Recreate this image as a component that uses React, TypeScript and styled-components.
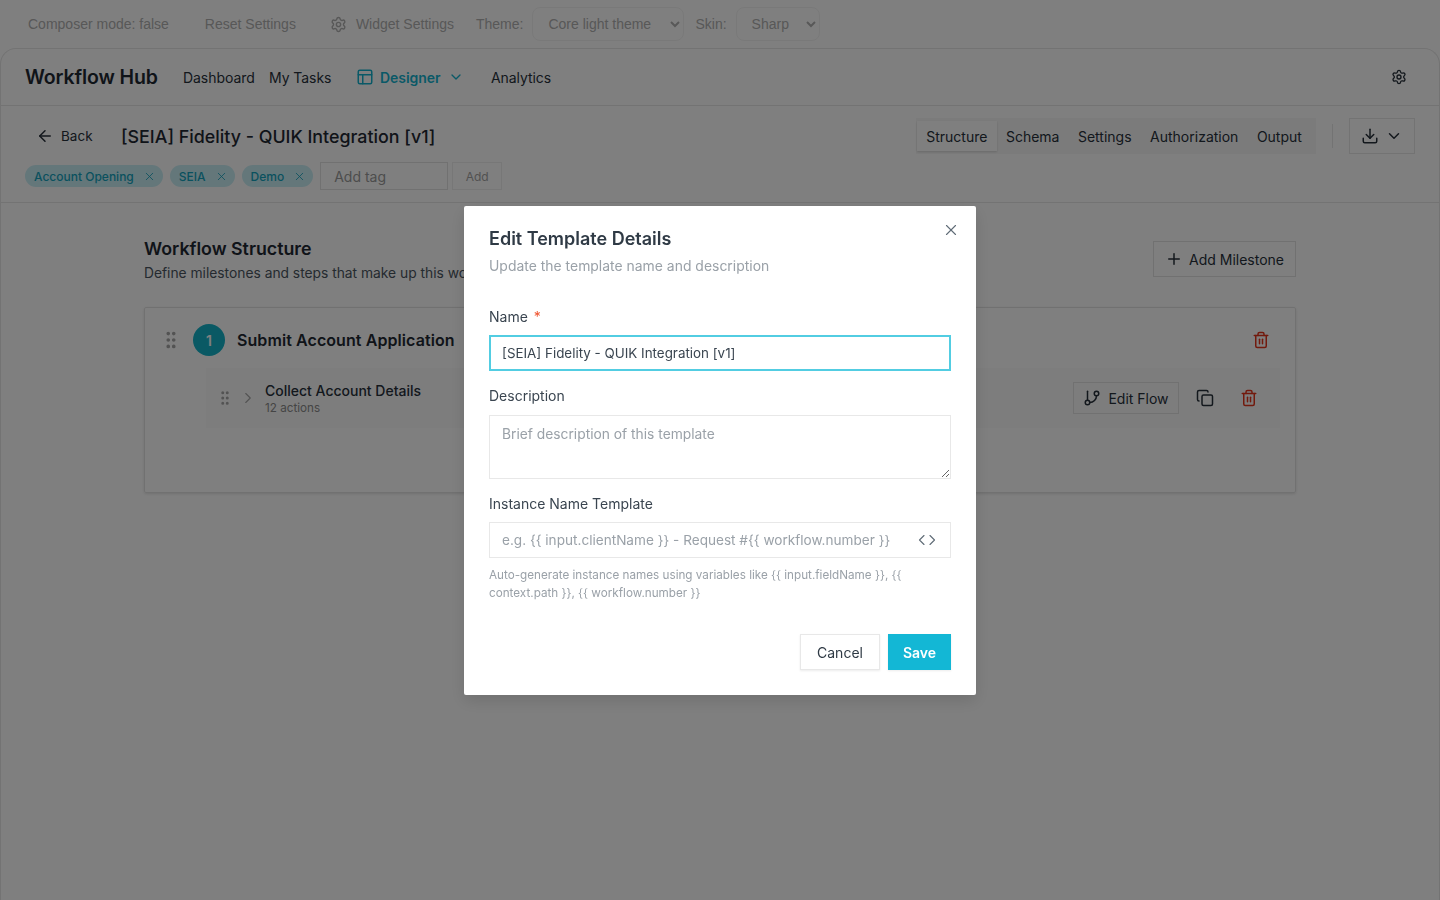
import styled, { createGlobalStyle } from "styled-components";
import {
  ArrowLeft,
  ChevronDown,
  ChevronRight,
  Code,
  Copy,
  Download,
  GitBranch,
  GripVertical,
  PanelsTopLeft,
  Plus,
  Settings,
  Trash2,
  X,
} from "lucide-react";

const GlobalStyle = createGlobalStyle`
  * {
    box-sizing: border-box;
  }
  html, body {
    margin: 0;
    height: 100%;
  }
  body {
    background: #ffffff;
    color: #27303a;
    font-family: Inter, "Liberation Sans", sans-serif;
    overflow: hidden;
  }
`;

const Page = styled.div`
  height: 900px;
  display: flex;
  flex-direction: column;
`;

const TopBar = styled.div`
  height: 48px;
  display: flex;
  align-items: center;
  padding-left: 28px;
  font-family: "Liberation Sans", sans-serif;
  font-size: 14px;
  color: #b0b0b0;
`;

const TopText = styled.span<{ $gap?: number }>`
  margin-right: ${(p) => p.$gap ?? 0}px;
`;

const TopIcon = styled.span`
  display: flex;
  margin-right: 9px;
`;

const TopSelect = styled.select<{ $width: number; $gap: number }>`
  width: ${(p) => p.$width}px;
  height: 34px;
  margin: 0 ${(p) => p.$gap}px 0 9px;
  padding: 0 9px 0 11px;
  border: 1px solid #f3f3f3;
  border-radius: 8px;
  background: transparent;
  color: #b0b0b0;
  font-family: "Liberation Sans", sans-serif;
  font-size: 14px;
`;

const Frame = styled.div`
  flex: 1;
  border: 1px solid #e6e6e6;
  border-bottom: none;
  border-radius: 16px 16px 0 0;
  display: flex;
  flex-direction: column;
`;

const NavBar = styled.div`
  height: 57px;
  display: flex;
  align-items: center;
  padding: 0 32px 0 24px;
  border-bottom: 1px solid #e6e6e6;
`;

const Brand = styled.div`
  font-size: 19.5px;
  font-weight: 600;
  letter-spacing: -0.1px;
  color: #1f2933;
  width: 158px;
`;

const NavItem = styled.div<{ $active?: boolean; $width: number }>`
  display: flex;
  align-items: center;
  width: ${(p) => p.$width}px;
  font-size: 14px;
  letter-spacing: -0.06px;
  font-weight: ${(p) => (p.$active ? 600 : 400)};
  color: ${(p) => (p.$active ? "#14b3cf" : "#27303a")};
`;

const NavIcon = styled.span`
  display: flex;
  margin-right: 6px;
`;

const NavCaret = styled.span`
  display: flex;
  margin-left: 8px;
`;

const Spacer = styled.div`
  flex: 1;
`;

const SubHeader = styled.div`
  height: 97px;
  padding: 12px 24px 0 24px;
  border-bottom: 1px solid #e6e6e6;
`;

const TitleRow = styled.div`
  display: flex;
  align-items: center;
  height: 36px;
`;

const BackLink = styled.div`
  display: flex;
  align-items: center;
  gap: 7px;
  width: 96px;
  padding-left: 11px;
  font-size: 13.5px;
`;

const PageTitle = styled.div`
  font-size: 17.85px;
  font-weight: 500;
  color: #1f2933;
`;

const Tabs = styled.div`
  display: flex;
  align-items: center;
  height: 36px;
  width: 400px;
  padding: 0 1px;
  background: #f7f7f7;
`;

const Tab = styled.div<{ $active?: boolean }>`
  height: 30px;
  display: flex;
  align-items: center;
  padding: 0 9.25px;
  font-size: 14px;
  background: ${(p) => (p.$active ? "#fff" : "transparent")};
  box-shadow: ${(p) => (p.$active ? "0 1px 2px rgba(0,0,0,.15)" : "none")};
`;

const Divider = styled.div`
  width: 1px;
  height: 24px;
  margin: 0 16px;
  background: #e6e6e6;
`;

const ExportButton = styled.div`
  width: 66px;
  height: 36px;
  display: flex;
  align-items: center;
  justify-content: center;
  gap: 6px;
  border: 1px solid #e6e6e6;
`;

const TagRow = styled.div`
  display: flex;
  align-items: center;
  height: 28px;
  margin-top: 8px;
`;

const Tag = styled.div`
  height: 22px;
  display: flex;
  align-items: center;
  gap: 9px;
  padding: 0 7px 0 9px;
  margin-right: 7px;
  border-radius: 11px;
  background: #c9eef5;
  color: #14a3bd;
  font-size: 12px;
  font-weight: 500;
`;

const TagInput = styled.div`
  width: 128px;
  height: 28px;
  display: flex;
  align-items: center;
  padding-left: 13px;
  margin-right: 4px;
  border: 1px solid #e3e3e3;
  background: #fff;
  color: #9a9a9a;
  font-size: 14px;
`;

const TagButton = styled.div`
  width: 50px;
  height: 28px;
  display: flex;
  align-items: center;
  justify-content: center;
  border: 1px solid #eeeeee;
  color: #a3a3a3;
  font-size: 12px;
`;

const Main = styled.div`
  padding: 38px 143px 0 143px;
`;

const SectionHead = styled.div`
  display: flex;
  justify-content: space-between;
  align-items: flex-start;
  height: 66px;
`;

const SectionTitle = styled.div`
  margin-top: -3px;
  font-size: 17.8px;
  font-weight: 600;
  color: #1f2933;
`;

const SectionSub = styled.div`
  margin-top: 6px;
  font-size: 13.8px;
  color: #4a5560;
`;

const OutlineButton = styled.div`
  display: flex;
  align-items: center;
  height: 36px;
  gap: 6px;
  padding: 0 11px;
  border: 1px solid #e3e3e3;
  font-size: 14px;
`;

const Card = styled.div`
  height: 186px;
  padding: 16px 15px 0 15px;
  border: 1px solid #e3e3e3;
  border-radius: 2px;
  box-shadow: 0 1px 3px rgba(0, 0, 0, 0.12);
`;

const MilestoneRow = styled.div`
  display: flex;
  align-items: center;
  height: 32px;
  padding-right: 10px;
`;

const Grip = styled.span<{ $gap: number }>`
  display: flex;
  color: #a6a6a6;
  margin-right: ${(p) => p.$gap}px;
`;

const StepNumber = styled.div`
  width: 32px;
  height: 32px;
  display: flex;
  align-items: center;
  justify-content: center;
  margin-right: 12px;
  border-radius: 50%;
  background: #14b3c8;
  color: #fff;
  font-size: 14px;
  font-weight: 600;
`;

const MilestoneName = styled.div`
  font-size: 16px;
  letter-spacing: 0.08px;
  font-weight: 600;
  color: #1f2933;
`;

const StepRow = styled.div`
  display: flex;
  align-items: center;
  height: 60px;
  margin: 12px 0 0 46px;
  padding: 0 22px 0 10px;
  background: #fbfbfb;
`;

const Chevron = styled.span`
  display: flex;
  color: #a6a6a6;
  margin: 0 8px 0 1px;
`;

const StepName = styled.div`
  font-size: 14px;
  font-weight: 500;
  color: #27303a;
`;

const StepMeta = styled.div`
  margin-top: 2px;
  font-size: 11.7px;
  color: #8a8a8a;
`;

const EditFlow = styled.div`
  width: 106px;
  height: 32px;
  display: flex;
  align-items: center;
  justify-content: center;
  gap: 7px;
  margin-right: 17px;
  border: 1px solid #e3e3e3;
  font-size: 14px;
`;

const IconButton = styled.span<{ $gap?: number }>`
  display: flex;
  margin-right: ${(p) => p.$gap ?? 0}px;
`;

const Overlay = styled.div`
  position: fixed;
  inset: 0;
  display: flex;
  justify-content: center;
  align-items: flex-start;
  padding-top: 206px;
  background: rgba(0, 0, 0, 0.5);
`;

const Modal = styled.div`
  position: relative;
  width: 512px;
  height: 489px;
  padding: 22px 25px 0 25px;
  background: #fff;
  border-radius: 2px;
  box-shadow: 0 6px 16px rgba(0, 0, 0, 0.12);
`;

const CloseButton = styled.span`
  position: absolute;
  top: 15px;
  right: 16px;
  display: flex;
  color: #5f6b76;
`;

const ModalTitle = styled.div`
  font-size: 18px;
  font-weight: 600;
  line-height: 22px;
  color: #2f3a45;
`;

const ModalSub = styled.div`
  margin-top: 6px;
  font-size: 13.95px;
  line-height: 20px;
  color: #9aa1a8;
`;

const Label = styled.label<{ $top: number }>`
  display: block;
  margin-top: ${(p) => p.$top}px;
  margin-bottom: 8px;
  font-size: 14px;
  line-height: 20px;
  color: #3a4550;
`;

const Required = styled.span`
  margin-left: 6px;
  color: #f0522d;
`;

const TextInput = styled.input<{ $focused?: boolean }>`
  display: block;
  width: 100%;
  height: 36px;
  padding: 0 ${(p) => (p.$focused ? 11 : 48)}px 0 ${(p) => (p.$focused ? 11 : 12)}px;
  border: ${(p) => (p.$focused ? "2px solid #52cde2" : "1px solid #e8e8e8")};
  outline: none;
  font-family: inherit;
  font-size: 13.4px;
  color: #3a4550;
  &::placeholder {
    color: #9aa1a8;
    font-size: 13.6px;
    opacity: 1;
  }
`;

const TextArea = styled.textarea`
  display: block;
  width: 100%;
  height: 64px;
  margin-top: 9px;
  padding: 9px 12px;
  border: 1px solid #e8e8e8;
  outline: none;
  font-family: inherit;
  font-size: 13.8px;
  line-height: 18px;
  &::placeholder {
    color: #9aa1a8;
    opacity: 1;
  }
`;

const InputWrap = styled.div`
  position: relative;
`;

const InputIcon = styled.span`
  position: absolute;
  top: 9px;
  right: 15px;
  display: flex;
  color: #5f6b76;
`;

const Help = styled.div`
  margin-top: 8px;
  font-size: 11.7px;
  line-height: 18px;
  color: #9aa1a8;
`;

const Actions = styled.div`
  display: flex;
  justify-content: flex-end;
  gap: 8px;
  margin-top: 32px;
`;

const Button = styled.button<{ $primary?: boolean }>`
  height: 36px;
  width: ${(p) => (p.$primary ? 63 : 80)}px;
  padding: 0;
  border: 1px solid ${(p) => (p.$primary ? "#13b7d5" : "#e8e8e8")};
  background: ${(p) => (p.$primary ? "#13b7d5" : "#fff")};
  color: ${(p) => (p.$primary ? "#fff" : "#2f3a45")};
  font-family: inherit;
  font-size: 14px;
  font-weight: ${(p) => (p.$primary ? 600 : 400)};
  box-shadow: 0 1px 2px rgba(0, 0, 0, 0.08);
`;

const tags = ["Account Opening", "SEIA", "Demo"];
const tabs = ["Structure", "Schema", "Settings", "Authorization", "Output"];
const helpText =
  "Auto-generate instance names using variables like {{ input.fieldName }}, {{ context.path }}, {{ workflow.number }}";

export default function App() {
  return (
    <>
      <GlobalStyle />
      <Page>
        <TopBar>
          <TopText $gap={36}>Composer mode: false</TopText>
          <TopText $gap={34}>Reset Settings</TopText>
          <TopIcon>
            <Settings size={17} />
          </TopIcon>
          <TopText $gap={22}>Widget Settings</TopText>
          <TopText>Theme:</TopText>
          <TopSelect $width={152} $gap={11} defaultValue="core">
            <option value="core">Core light theme</option>
          </TopSelect>
          <TopText>Skin:</TopText>
          <TopSelect $width={84} $gap={0} defaultValue="sharp">
            <option value="sharp">Sharp</option>
          </TopSelect>
        </TopBar>
        <Frame>
          <NavBar>
            <Brand>Workflow Hub</Brand>
            <NavItem $width={86}>Dashboard</NavItem>
            <NavItem $width={87}>My Tasks</NavItem>
            <NavItem $active $width={135}>
              <NavIcon>
                <PanelsTopLeft size={18} />
              </NavIcon>
              Designer
              <NavCaret>
                <ChevronDown size={16} />
              </NavCaret>
            </NavItem>
            <NavItem $width={70}>Analytics</NavItem>
            <Spacer />
            <Settings size={16} />
          </NavBar>
          <SubHeader>
            <TitleRow>
              <BackLink>
                <ArrowLeft size={18} />
                Back
              </BackLink>
              <PageTitle>[SEIA] Fidelity - QUIK Integration [v1]</PageTitle>
              <Spacer />
              <Tabs>
                {tabs.map((tab, i) => (
                  <Tab key={tab} $active={i === 0}>
                    {tab}
                  </Tab>
                ))}
              </Tabs>
              <Divider />
              <ExportButton>
                <Download size={18} />
                <ChevronDown size={18} />
              </ExportButton>
            </TitleRow>
            <TagRow>
              {tags.map((tag) => (
                <Tag key={tag}>
                  {tag}
                  <X size={13} strokeWidth={1.5} />
                </Tag>
              ))}
              <TagInput>Add tag</TagInput>
              <TagButton>Add</TagButton>
            </TagRow>
          </SubHeader>
          <Main>
            <SectionHead>
              <div>
                <SectionTitle>Workflow Structure</SectionTitle>
                <SectionSub>Define milestones and steps that make up this workflow</SectionSub>
              </div>
              <OutlineButton>
                <Plus size={18} />
                Add Milestone
              </OutlineButton>
            </SectionHead>
            <Card>
              <MilestoneRow>
                <Grip $gap={11}>
                  <GripVertical size={22} />
                </Grip>
                <StepNumber>1</StepNumber>
                <MilestoneName>Submit Account Application</MilestoneName>
                <Spacer />
                <Trash2 size={18} color="#e5341b" />
              </MilestoneRow>
              <StepRow>
                <Grip $gap={4}>
                  <GripVertical size={18} />
                </Grip>
                <Chevron>
                  <ChevronRight size={18} strokeWidth={1.5} />
                </Chevron>
                <div>
                  <StepName>Collect Account Details</StepName>
                  <StepMeta>12 actions</StepMeta>
                </div>
                <Spacer />
                <EditFlow>
                  <GitBranch size={18} />
                  Edit Flow
                </EditFlow>
                <IconButton $gap={26}>
                  <Copy size={18} />
                </IconButton>
                <IconButton>
                  <Trash2 size={18} color="#e5341b" />
                </IconButton>
              </StepRow>
            </Card>
          </Main>
        </Frame>
      </Page>
      <Overlay>
        <Modal>
          <CloseButton>
            <X size={18} strokeWidth={1.5} />
          </CloseButton>
          <ModalTitle>Edit Template Details</ModalTitle>
          <ModalSub>Update the template name and description</ModalSub>
          <Label $top={31}>
            Name<Required>*</Required>
          </Label>
          <TextInput $focused readOnly value="[SEIA] Fidelity - QUIK Integration [v1]" />
          <Label $top={15}>Description</Label>
          <TextArea placeholder="Brief description of this template" />
          <Label $top={15}>Instance Name Template</Label>
          <InputWrap>
            <TextInput placeholder="e.g. {{ input.clientName }} - Request #{{ workflow.number }}" />
            <InputIcon>
              <Code size={18} strokeWidth={1.5} />
            </InputIcon>
          </InputWrap>
          <Help>{helpText}</Help>
          <Actions>
            <Button>Cancel</Button>
            <Button $primary>Save</Button>
          </Actions>
        </Modal>
      </Overlay>
    </>
  );
}
